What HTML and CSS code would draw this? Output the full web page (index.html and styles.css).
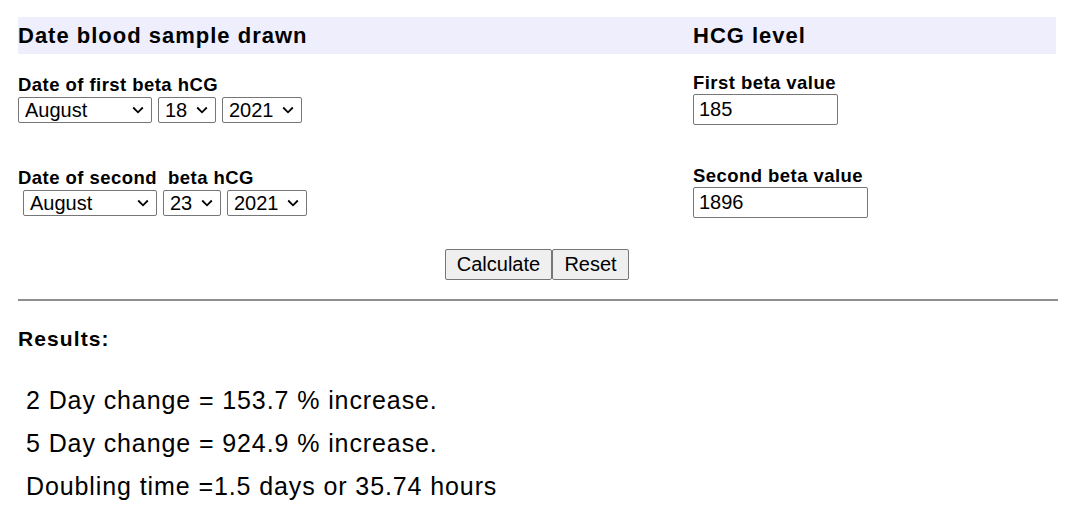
FILE: index.html
```html
<!DOCTYPE html>
<html lang="en">
<head>
<meta charset="utf-8">
<title>HCG Calculator</title>
<link rel="stylesheet" href="styles.css">
</head>
<body>
<div class="page">
  <div class="band">
    <h2 class="band-title">Date blood sample drawn</h2>
    <h2 class="band-title">HCG level</h2>
  </div>

  <div class="form">
    <div class="col col-dates">
      <div class="label label-first">Date of first beta hCG</div>
      <div class="selects">
        <select class="sel sel-month"><option>July</option><option selected>August</option><option>September</option></select>
        <select class="sel sel-day"><option>17</option><option selected>18</option><option>19</option></select>
        <select class="sel sel-year"><option>2020</option><option selected>2021</option><option>2022</option></select>
      </div>
      <div class="label label-second">Date of second&nbsp; beta hCG</div>
      <div class="selects selects-indent">
        <select class="sel sel-month"><option>July</option><option selected>August</option><option>September</option></select>
        <select class="sel sel-day"><option>22</option><option selected>23</option><option>24</option></select>
        <select class="sel sel-year"><option>2020</option><option selected>2021</option><option>2022</option></select>
      </div>
    </div>
    <div class="col col-values">
      <div class="label vlabel-first">First beta value</div>
      <input class="value value-first" type="text" value="185">
      <div class="label vlabel-second">Second beta value</div>
      <input class="value value-second" type="text" value="1896">
    </div>
  </div>

  <div class="buttons">
    <button class="btn btn-calc" type="button">Calculate</button><button class="btn btn-reset" type="button">Reset</button>
  </div>

  <div class="rule"></div>

  <div class="results-title">Results:</div>
  <div class="results">
    <div class="result-line">2 Day change = 153.7 % increase.</div>
    <div class="result-line">5 Day change = 924.9 % increase.</div>
    <div class="result-line">Doubling time =1.5 days or 35.74 hours</div>
  </div>
</div>
</body>
</html>
```

FILE: styles.css
```css
html, body {
  margin: 0;
  padding: 0;
  background: #ffffff;
}

body {
  font-family: "Liberation Sans", Arial, sans-serif;
  color: #000000;
}

.page {
  width: 1040px;
  padding: 17px 0 0 18px;
}

.band {
  display: grid;
  grid-template-columns: 675px 1fr;
  width: 1038px;
  height: 37px;
  align-items: center;
  background: #eeeefc;
}

.band-title {
  margin: 0;
  font-size: 22px;
  font-weight: bold;
  letter-spacing: 1px;
  line-height: 24px;
}

.form {
  display: grid;
  grid-template-columns: 675px 1fr;
  align-items: start;
}

.col {
  display: flex;
  flex-direction: column;
  align-items: flex-start;
}

.label {
  font-size: 18.5px;
  font-weight: bold;
  letter-spacing: 0.45px;
  line-height: 20px;
  white-space: nowrap;
}

.label-first { margin-top: 21px; }
.label-second { margin-top: 45px; }
.vlabel-first { margin-top: 19px; }
.vlabel-second { margin-top: 41px; }

.selects {
  display: flex;
  gap: 6px;
  margin-top: 2px;
}

.selects-indent {
  padding-left: 5px;
}

.sel {
  -webkit-appearance: none;
  appearance: none;
  box-sizing: border-box;
  height: 26px;
  margin: 0;
  padding: 0 0 0 6px;
  border: 1px solid #767676;
  border-radius: 2px;
  background-color: #ffffff;
  background-image: url("data:image/svg+xml;utf8,<svg xmlns='http://www.w3.org/2000/svg' width='12' height='8' viewBox='0 0 12 8'><path d='M1.2 1.5l4.8 4.8 4.8-4.8' fill='none' stroke='%23000' stroke-width='1.8'/></svg>");
  background-repeat: no-repeat;
  background-position: right 7px center;
  font-family: "Liberation Sans", Arial, sans-serif;
  font-size: 20px;
  line-height: 24px;
  color: #000000;
}

.sel-month { width: 134px; }
.sel-day { width: 58px; }
.sel-year { width: 80px; }

.value {
  box-sizing: border-box;
  height: 31px;
  margin: 1px 0 0 0;
  padding: 0 0 0 5px;
  border: 1px solid #767676;
  border-radius: 2px;
  background: #ffffff;
  font-family: "Liberation Sans", Arial, sans-serif;
  font-size: 20px;
  color: #000000;
  outline: none;
}

.value-first { width: 145px; }
.value-second { width: 175px; }

.buttons {
  display: flex;
  justify-content: center;
  margin-top: 31px;
  padding-right: 2px;
}

.btn {
  box-sizing: border-box;
  height: 31px;
  margin: 0;
  padding: 0;
  border: 1px solid #767676;
  border-radius: 2px;
  background: #efefef;
  font-family: "Liberation Sans", Arial, sans-serif;
  font-size: 20px;
  color: #000000;
}

.btn-calc { width: 107px; }
.btn-reset { width: 77px; }

.rule {
  width: 1040px;
  height: 2px;
  margin-top: 19px;
  background: #8f8f8f;
}

.results-title {
  margin-top: 26px;
  font-size: 21px;
  font-weight: bold;
  letter-spacing: 1.1px;
  line-height: 24px;
}

.results {
  margin-top: 28px;
  padding-left: 8px;
}

.result-line {
  font-size: 25px;
  letter-spacing: 0.9px;
  line-height: 43px;
  white-space: nowrap;
}
```
